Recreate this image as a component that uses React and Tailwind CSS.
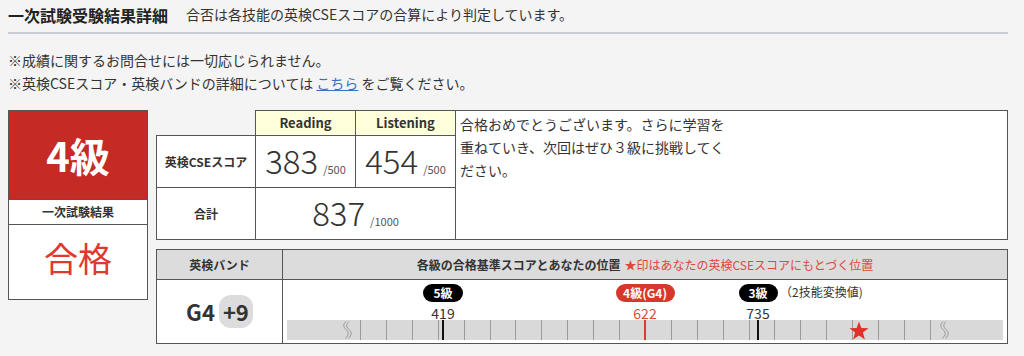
const TICKS = Array.from({ length: 23 }, (_, i) => 73 + i * 25.9);

const MARKERS = [
  { label: '5級', score: '419', x: 160, w: 40, red: false },
  { label: '4級(G4)', score: '622', x: 362, w: 59, red: true },
  { label: '3級', score: '735', x: 475, w: 39, red: false },
];

function Wave({ x }) {
  return (
    <svg
      className="absolute top-[1px]"
      style={{ left: x - 5 }}
      width="10"
      height="18"
      viewBox="0 0 10 18"
      fill="none"
      stroke="#8f8f8f"
      strokeWidth="0.9"
    >
      <path d="M4 0.5 C1 3.5 1 5.5 4 8.5 C7 11.5 7 13.5 3.5 17.5" />
      <path d="M7 0.5 C4 3.5 4 5.5 7 8.5 C10 11.5 10 13.5 6.5 17.5" />
    </svg>
  );
}

function BandChart() {
  return (
    <div className="relative h-[63px]">
      {MARKERS.map((m) => (
        <div key={m.label}>
          <div
            className={`absolute top-[4px] flex h-[18px] items-center justify-center rounded-full text-[12px] font-bold leading-none text-white ${
              m.red ? 'bg-[#d8382c]' : 'bg-black'
            }`}
            style={{ left: m.x - m.w / 2, width: m.w }}
          >
            {m.label}
          </div>
          <div
            className={`absolute top-[24px] w-[40px] text-center text-[14px] leading-[18px] ${
              m.red ? 'text-[#e0473c]' : 'text-[#333]'
            }`}
            style={{ left: m.x - 20 }}
          >
            {m.score}
          </div>
        </div>
      ))}
      <div className="absolute left-[497px] top-[3px] text-[12px] leading-[18px] text-[#333]">（2技能変換値)</div>

      <div className="absolute left-[4px] right-[4px] top-[40px] h-[20px] bg-[#d9d9d9]">
        {TICKS.map((t) => (
          <div key={t} className="absolute top-0 h-full w-px bg-[#999]" style={{ left: t }} />
        ))}
        <Wave x={60} />
        <Wave x={657} />
        <div className="absolute top-0 h-full w-[2px] bg-[#111]" style={{ left: 155 }} />
        <div className="absolute top-0 h-full w-[2px] bg-[#e0392e]" style={{ left: 357 }} />
        <div className="absolute top-0 h-full w-[2px] bg-[#111]" style={{ left: 470 }} />
        <svg className="absolute top-[1px]" style={{ left: 562 }} width="20" height="19" viewBox="0 0 20 19">
          <polygon
            points="10,0.5 12.4,7.1 19.5,7.3 13.9,11.6 15.9,18.5 10,14.4 4.1,18.5 6.1,11.6 0.5,7.3 7.6,7.1"
            fill="#e3302a"
          />
        </svg>
      </div>
    </div>
  );
}

function Score({ value, max }) {
  return (
    <>
      <span className="text-[33px] font-light leading-none">{value}</span>
      <span className="ml-[5px] text-[11px] text-[#555]">/{max}</span>
    </>
  );
}

export default function App() {
  return (
    <div
      className="min-h-[356px] w-full bg-[#f4f4f4] text-[#333]"
      style={{ fontFamily: '"Noto Sans CJK JP", "Noto Sans", sans-serif' }}
    >
      <div className="ml-[8px] w-[1000px]">
        <div className="flex h-[34px] items-center gap-[18px] border-b-2 border-[#c9ccd5] pb-[3px]">
          <h1 className="text-[16px] font-bold text-[#222]">一次試験受験結果詳細</h1>
          <p className="text-[14px]">合否は各技能の英検CSEスコアの合算により判定しています。</p>
        </div>

        <div className="mt-[15px] text-[14px] leading-[23px]">
          <p>※成績に関するお問合せには一切応じられません。</p>
          <p>
            ※英検CSEスコア・英検バンドの詳細については{' '}
            <a href="#" className="text-[#3a6fc6] underline">
              こちら
            </a>{' '}
            をご覧ください。
          </p>
        </div>

        <div className="mt-[15px] flex gap-[8px]">
          <div className="flex h-[190px] w-[140px] flex-col border border-[#555] bg-white">
            <div className="flex h-[88px] items-center justify-center bg-[#c52a24] text-[40px] font-bold text-white">
              4級
            </div>
            <div className="flex h-[26px] items-center justify-center border-y border-[#555] text-[12px] font-bold">
              一次試験結果
            </div>
            <div className="flex flex-1 items-center justify-center pb-[10px] text-[34px] text-[#e0382e]">合格</div>
          </div>

          <div className="flex w-[852px] flex-col gap-[9px]">
            <table className="w-[852px] table-fixed border-collapse">
              <colgroup>
                <col className="w-[99px]" />
                <col className="w-[100px]" />
                <col className="w-[100px]" />
                <col />
              </colgroup>
              <tbody>
                <tr className="h-[25px]">
                  <td className="p-0" />
                  <td className="border border-[#555] bg-[#ffffdc] p-0 text-center text-[13px] font-bold">Reading</td>
                  <td className="border border-[#555] bg-[#ffffdc] p-0 text-center text-[13px] font-bold">Listening</td>
                  <td rowSpan={3} className="border border-[#555] bg-white px-[4px] pt-[2px] align-top">
                    <p className="w-[272px] text-[14px] leading-[23px]">
                      合格おめでとうございます。さらに学習を重ねていき、次回はぜひ３級に挑戦してください。
                    </p>
                  </td>
                </tr>
                <tr className="h-[52px]">
                  <td className="border border-[#555] bg-white p-0 text-center text-[12px] font-bold">英検CSEスコア</td>
                  <td className="border border-[#555] bg-white p-0 text-center">
                    <Score value="383" max="500" />
                  </td>
                  <td className="border border-[#555] bg-white p-0 text-center">
                    <Score value="454" max="500" />
                  </td>
                </tr>
                <tr className="h-[52px]">
                  <td className="border border-[#555] bg-white p-0 text-center text-[12px] font-bold">合計</td>
                  <td colSpan={2} className="border border-[#555] bg-white p-0 text-center">
                    <Score value="837" max="1000" />
                  </td>
                </tr>
              </tbody>
            </table>

            <table className="w-[852px] table-fixed border-collapse">
              <colgroup>
                <col className="w-[126px]" />
                <col />
              </colgroup>
              <tbody>
                <tr className="h-[30px] bg-[#dcdcdc]">
                  <td className="border border-[#555] p-0 text-center text-[12px] font-bold">英検バンド</td>
                  <td className="border border-[#555] p-0 text-center text-[12px]">
                    <span className="font-bold">各級の合格基準スコアとあなたの位置</span>
                    <span className="ml-[4px] text-[#e0473c]">★印はあなたの英検CSEスコアにもとづく位置</span>
                  </td>
                </tr>
                <tr className="bg-white">
                  <td className="border border-[#555] p-0">
                    <div className="flex items-center justify-center gap-[4px] text-[22px] font-bold text-[#333]">
                      <span>G4</span>
                      <span className="flex h-[33px] w-[34px] items-center justify-center rounded-[12px] bg-[#dcdcdc]">
                        +9
                      </span>
                    </div>
                  </td>
                  <td className="border border-[#555] p-0">
                    <BandChart />
                  </td>
                </tr>
              </tbody>
            </table>
          </div>
        </div>
      </div>
    </div>
  );
}
